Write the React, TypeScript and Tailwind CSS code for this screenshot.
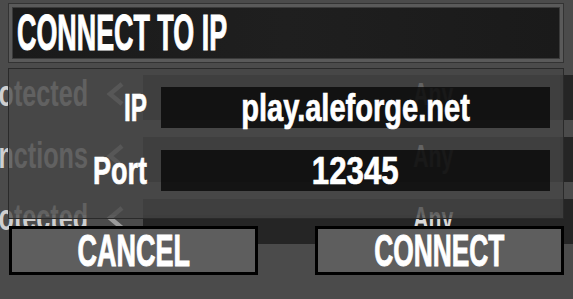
import React from "react";

const Chevron = () => (
  <svg width="22" height="26" viewBox="0 0 22 26" className="shrink-0">
    <path d="M18 3 L6 13 L18 23" fill="none" stroke="#9a9a9a" strokeWidth="4.5" strokeLinejoin="miter" />
  </svg>
);

const rows = ["Password Protected", "Max Functions", "Password Protected"];

export default function App() {
  return (
    <div className="relative w-[573px] h-[299px] overflow-hidden bg-[#4b4b4b] font-['Liberation_Sans',sans-serif] font-bold">
      {/* underlying page */}
      <div className="pt-[75px] flex flex-col gap-[17px]">
        {rows.map((r, i) => (
          <div key={i} className="flex h-[45px]">
            <div className="w-[143px] shrink-0 flex items-center pb-[8px]">
              <div className="w-[88px] overflow-hidden flex justify-end whitespace-nowrap text-[36px] leading-none text-[#cfcfcf]">
                <span className="inline-block origin-right scale-x-[0.7]">{r}</span>
              </div>
              <div className="ml-[16px]">
                <Chevron />
              </div>
            </div>
            <div className="w-[580px] shrink-0 bg-[#252525] flex items-center justify-center pb-[8px] text-[32px] leading-none text-[#d8d8d8]">
              <span className="inline-block scale-x-[0.66]">Any</span>
            </div>
          </div>
        ))}
      </div>

      {/* dialog */}
      <div className="absolute inset-0 flex flex-col px-[8px] pt-[3px] text-white">
        <div className="w-[556px] h-[60px] border border-[#333333] bg-[#5a5a5a] p-[3px]">
          <div className="h-full border border-[#3a3a3a] bg-[linear-gradient(90deg,#1a1a1a,#1f1f1f_50%,#1a1a1a)] flex items-center pl-[4px]">
            <span className="inline-block origin-left scale-x-[0.56] scale-y-[1.04] text-[48px] leading-none whitespace-nowrap [-webkit-text-stroke:1px_white]">CONNECT TO IP</span>
          </div>
        </div>

        <div className="mt-[5px] w-[556px] h-[151px] border border-[#2a2a2a] bg-[rgba(70,70,70,0.74)] p-[3px]">
          <div className="h-full flex flex-col pt-[15px] gap-[22px] bg-[rgba(72,72,72,0.25)]">
            <div className="flex items-center">
              <div className="w-[135px] text-right text-[38px] leading-none">
                <span className="inline-block origin-right scale-x-[0.64] [-webkit-text-stroke:0.7px_white]">IP</span>
              </div>
              <div className="ml-[14px] w-[389px] h-[41px] bg-[rgba(8,8,8,0.82)] flex items-center justify-center text-[39px] leading-none whitespace-nowrap">
                <span className="inline-block scale-x-[0.745] [-webkit-text-stroke:0.7px_white]">play.aleforge.net</span>
              </div>
            </div>
            <div className="flex items-center">
              <div className="w-[135px] text-right text-[38px] leading-none">
                <span className="inline-block origin-right scale-x-[0.71] [-webkit-text-stroke:0.7px_white]">Port</span>
              </div>
              <div className="ml-[14px] w-[389px] h-[41px] bg-[rgba(8,8,8,0.82)] flex items-center justify-center text-[39px] leading-none whitespace-nowrap">
                <span className="inline-block scale-x-[0.8] [-webkit-text-stroke:0.7px_white]">12345</span>
              </div>
            </div>
          </div>
        </div>

        <div className="mt-[7px] flex justify-between w-[556px] pl-[1px]">
          <div className="w-[249px] h-[49px] border-[3px] border-black bg-[#5e5e5e] flex items-center justify-center text-[45px] leading-none">
            <span className="inline-block scale-x-[0.6] [-webkit-text-stroke:1px_white]">CANCEL</span>
          </div>
          <div className="w-[249px] h-[49px] border-[3px] border-black bg-[#5e5e5e] flex items-center justify-center text-[45px] leading-none">
            <span className="inline-block scale-x-[0.585] [-webkit-text-stroke:1px_white]">CONNECT</span>
          </div>
        </div>
      </div>
    </div>
  );
}
